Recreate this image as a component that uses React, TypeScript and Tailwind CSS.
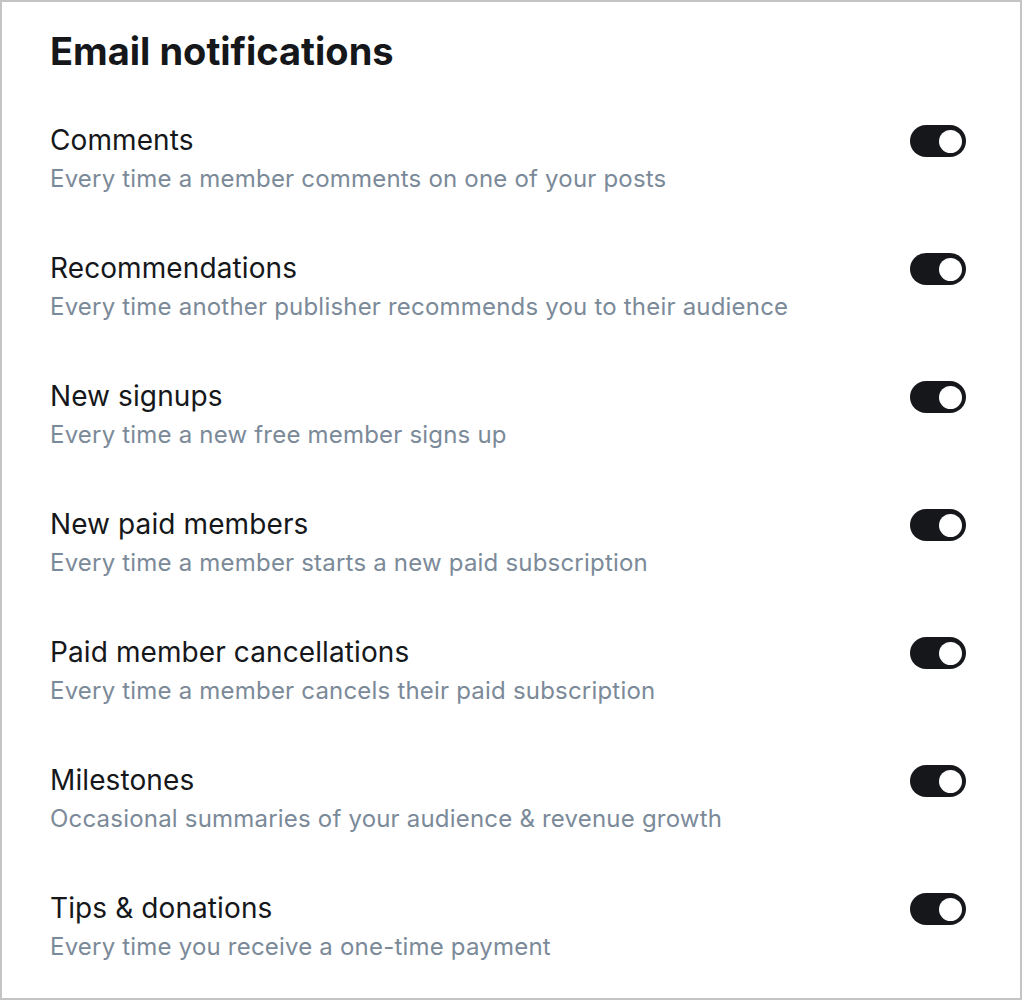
import React, { useState } from 'react';

const ITEMS = [
  { id: 'comments', title: 'Comments', desc: 'Every time a member comments on one of your posts' },
  { id: 'recs', title: 'Recommendations', desc: 'Every time another publisher recommends you to their audience' },
  { id: 'signups', title: 'New signups', desc: 'Every time a new free member signs up' },
  { id: 'paid', title: 'New paid members', desc: 'Every time a member starts a new paid subscription' },
  { id: 'cancel', title: 'Paid member cancellations', desc: 'Every time a member cancels their paid subscription' },
  { id: 'milestones', title: 'Milestones', desc: 'Occasional summaries of your audience & revenue growth' },
  { id: 'tips', title: 'Tips & donations', desc: 'Every time you receive a one-time payment' },
];

function Toggle({ on, onClick }: { on: boolean; onClick: () => void }) {
  return (
    <button
      onClick={onClick}
      className={`shrink-0 w-[56px] h-[32px] rounded-full flex items-center px-[4px] ${on ? 'bg-[#15171a] justify-end' : 'bg-[#dfe3e7] justify-start'}`}
    >
      <span className="w-[23px] h-[23px] rounded-full bg-white" />
    </button>
  );
}

export default function App() {
  const [enabled, setEnabled] = useState<Record<string, boolean>>(
    Object.fromEntries(ITEMS.map(i => [i.id, true]))
  );

  return (
    <div className="w-[1022px] h-[1000px] border-2 border-[#c4c4c4] bg-white font-['Inter',sans-serif] pl-[48px] pr-[49px] pt-[25px]">
      <h1 className="text-[38px] leading-[48px] font-bold text-[#15171a]">Email notifications</h1>

      <div className="mt-[47px] flex flex-col gap-[55px]">
        {ITEMS.map(item => (
          <div key={item.id} className="flex items-start justify-between">
            <div>
              <div className="text-[28px] leading-[36px] tracking-[0.1px] text-[#15171a]">{item.title}</div>
              <div className="mt-[5px] text-[24px] leading-[32px] tracking-[0.2px] text-[#7b8a99]">{item.desc}</div>
            </div>
            <div className="mt-[3px] mr-[5px]">
              <Toggle on={enabled[item.id]} onClick={() => setEnabled(prev => ({ ...prev, [item.id]: !prev[item.id] }))} />
            </div>
          </div>
        ))}
      </div>
    </div>
  );
}
